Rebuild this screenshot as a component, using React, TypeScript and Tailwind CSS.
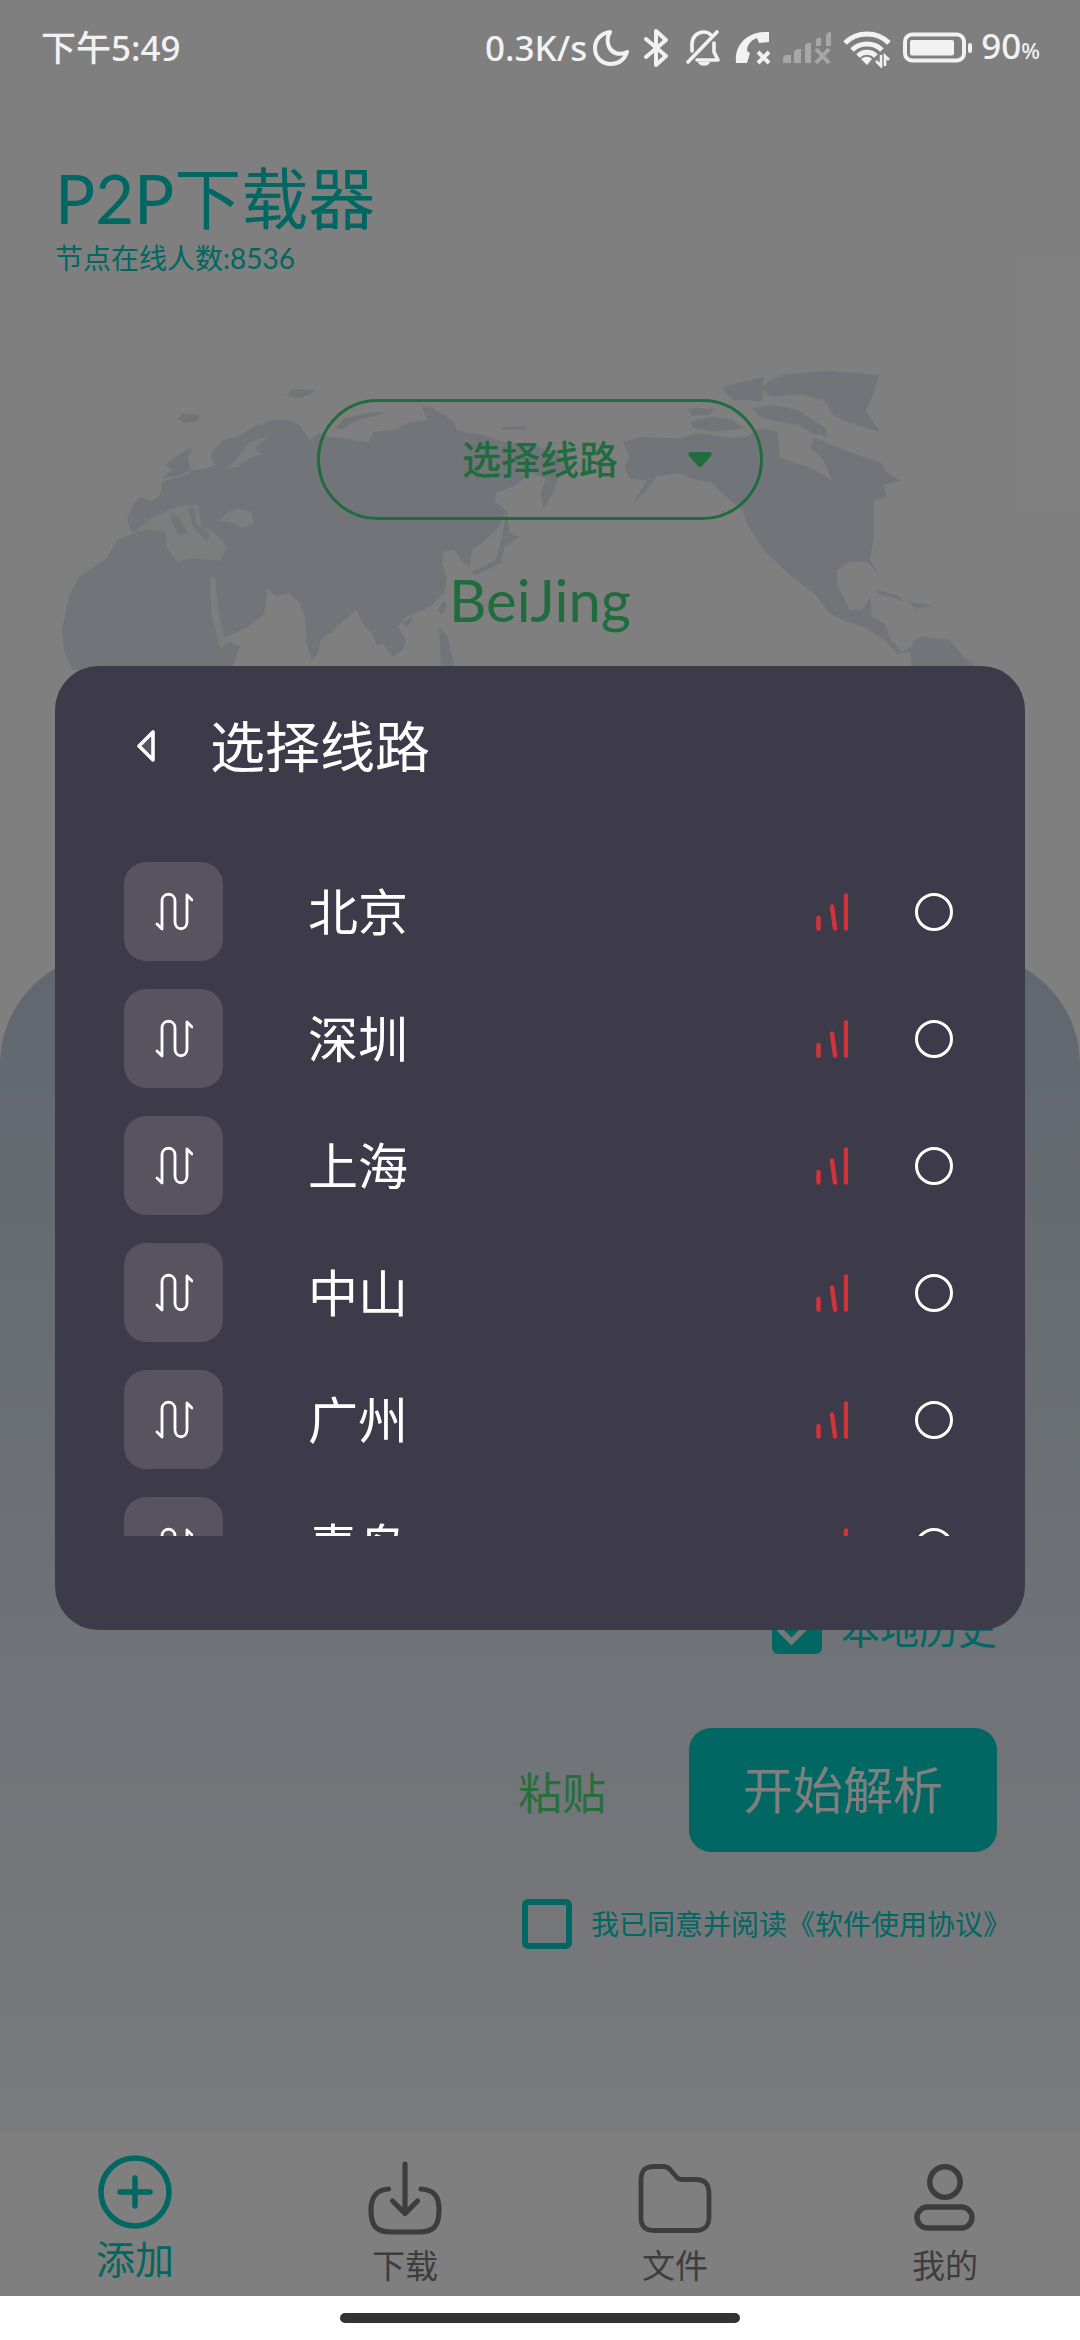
import React, { useState } from 'react';

type IconProps = {
  className?: string;
};

const lines = ['北京', '深圳', '上海', '中山', '广州', '青岛'];

const StatusIcons: React.FC = () => (
  <>
    <svg className="ml-1.5 h-10 w-9" viewBox="0 0 36 40" fill="none" stroke="currentColor" strokeWidth="4" strokeLinejoin="round">
      <path d="M17 4C8 5 2 12 2 20c0 10 7 16 16 16 8 0 14-5 16-12-8 4-15 1-18-5-2-5-2-10 1-15Z" />
    </svg>
    <svg className="ml-3.5 h-10 w-7" viewBox="0 0 28 40" fill="none" stroke="currentColor" strokeWidth="4" strokeLinejoin="round" strokeLinecap="round">
      <path d="M3 11l20 17-10 9V3l10 9L3 29" />
    </svg>
    <svg className="ml-3.5 h-10 w-9" viewBox="0 0 36 40" fill="none" stroke="currentColor" strokeWidth="3.6" strokeLinecap="round">
      <path d="M32 4 3 34" />
      <path d="M7 23V16C7 9 12 4 19 4c3 0 5 1 7 3" />
      <path d="M29 15v9l4 8H12" strokeLinejoin="round" />
      <path d="M13 34h12c-1 5-11 5-12 0Z" fill="currentColor" stroke="none" />
    </svg>
    <svg className="ml-3.5 h-10 w-9" viewBox="0 0 36 40">
      <path fill="currentColor" d="M1 35C-1 16 13 3 34 4v10l-10 1-2-5c-6 2-10 7-10 13l3 2-3 10H3Z" />
      <path d="m23 24 11 11m0-11L23 35" stroke="currentColor" strokeWidth="4" fill="none" />
    </svg>
    <svg className="ml-3 h-10 w-12 opacity-35" viewBox="0 0 48 40">
      <path fill="currentColor" d="M0 35v-4q0-4 4-4h4v8ZM11 35V25q0-3 3-4h4v14ZM22 35V18q0-3 3-3h3v20ZM33 18v-5q0-3 3-3h2v8ZM43 18V8q0-3 3-4h2v14Z" />
      <path d="m33 21 13 14m0-14L33 35" stroke="currentColor" strokeWidth="4" fill="none" />
    </svg>
    <svg className="ml-3 h-10 w-12" viewBox="0 0 48 40" fill="none" stroke="currentColor" strokeWidth="5">
      <path d="M2 15C14 3 34 3 46 15M9 22c8-8 22-8 30 0M15 28c5-5 13-5 18 0" />
      <path d="M18 31c4-3 8-3 11 0l-5 6Z" fill="currentColor" stroke="none" />
      <path d="M38 27v11l-5-5M42 38V28l4 4" strokeWidth="2.6" />
    </svg>
    <svg className="ml-3 h-10 w-[70px]" viewBox="0 0 70 40" fill="currentColor">
      <rect x="2" y="6.500" width="59" height="26" rx="7" fill="none" stroke="currentColor" strokeWidth="4" />
      <rect x="7" y="12" width="44" height="15.500" rx="2" />
      <rect x="65" y="15" width="4" height="10" rx="2" />
    </svg>
  </>
);

const WorldMap: React.FC<IconProps> = ({ className }) => (
  <svg className={className} viewBox="0 0 3136 960" preserveAspectRatio="none" aria-hidden="true">
    <g fill="#e3e9f2">
      <path d="M375 535 370 500 390 460 410 440 440 455 465 435 470 395 500 385 530 380 560 360 600 355 625 345 610 320 620 300 650 270 700 255 740 228 790 210 840 210 870 225 890 255 900 270 925 250 960 262 1000 265 1040 272 1070 275 1085 245 1150 240 1180 220 1240 210 1225 170 1250 170 1290 195 1320 215 1325 240 1400 255 1460 275 1540 285 1600 300 1655 335 1625 375 1605 430 1578 480 1570 430 1585 385 1540 370 1500 405 1440 430 1437 455 1468 480 1450 530 1400 580 1370 600 1365 650 1345 640 1320 600 1290 605 1283 640 1297 680 1290 730 1250 770 1180 800 1155 830 1178 870 1170 900 1140 920 1110 880 1095 890 1080 850 1060 830 1035 780 1010 800 960 850 930 870 925 910 905 930 890 880 885 800 870 760 840 730 800 738 775 715 770 790 720 830 650 865 697 890 670 960 210 960 185 900 180 840 200 740 230 680 310 625 340 570 390 550Z" />
      <path d="M470 385 500 360 480 345 510 320 525 310 560 290 545 325 555 360 520 378Z" />
      <path d="M515 205 530 190 580 195 575 215 535 220ZM830 135 850 118 915 120 900 135 860 145ZM975 235 1000 205 1090 185 1120 190 1040 210 990 240ZM1455 232l70-4 5 10-70 2Z" />
      <path d="M1470 470 1480 550 1510 560 1465 590 1455 640 1380 675 1370 665 1440 630 1455 570 1462 530ZM1170 820l25-20 5 10-20 20ZM1270 780l20-30 8 20-15 25ZM1275 830l25 30 20 90h-40Z" />
      <g transform="translate(1568 0)">
        <path d="M240 275 290 262 400 265 460 250 560 265 600 260 640 235 690 245 695 320 730 335 775 350 820 372 848 392 820 325 785 295 795 262 860 290 950 325 990 340 1010 370 1048 392 1000 405 1005 440 970 452 970 560 958 630 990 680 950 635 900 635 862 660 865 710 900 780 935 780 960 740 963 800 1000 820 1020 870 1050 905 1080 890 1085 870 1110 860 1190 870 1230 920 1280 960 1080 960 1075 905 1040 912 1000 870 940 830 890 815 840 790 800 735 720 670 650 600 600 520 588 480 540 440 500 400 440 385 400 370 340 378 310 420 270 460 310 392 260 385 245 350 260 320Z" />
        <path d="M660 95 700 75 830 62 985 75 970 130 945 185 988 245 900 220 850 195 830 155 760 132 670 140 645 115Z" />
        <path d="M525 112 650 80 645 155 600 150 560 150ZM430 180 450 172 510 180 490 195 440 198ZM435 215 500 200 560 210 590 235 520 245 445 235ZM615 175 680 165 750 180 830 235 835 262 790 250 750 225 690 215 640 200ZM975 720l60 15 25 20-80-25ZM1070 755l70 12-50 10Z" />
      </g>
    </g>
    <g fill="#f9fafb">
      <path d="M385 547 440 505 495 478 545 465 575 465 585 530 620 545 660 590 640 632 560 625 515 635 485 595 480 545 430 540Z" />
      <path d="M640 512 660 488 690 475 730 485 735 520 705 535 680 520ZM650 360 680 335 725 275 780 258 740 295 760 312 725 325 690 350Z" />
      <path d="M610 680 625 680 635 790 655 868 690 860 640 895 615 800Z" />
    </g>
    <g fill="#e3e9f2">
      <path d="M495 485 520 505 545 550 520 555 500 520ZM545 470 565 475 570 520 610 555 600 575 560 530Z" />
    </g>
  </svg>
);

const RouteIcon: React.FC<IconProps> = ({ className }) => (
  <svg className={className} viewBox="0 0 38 40" fill="none" stroke="currentColor" strokeWidth="2.800" strokeLinecap="round" strokeLinejoin="round">
    <path d="M2 32l5 5V9c0-9 13-9 13 0v21c0 9 12 9 12 0V3l5 5" />
  </svg>
);

const SignalIcon: React.FC<IconProps> = ({ className }) => (
  <svg className={className} viewBox="0 0 32 38" fill="none" stroke="#d1333b" strokeWidth="4.500" strokeLinecap="round">
    <path d="M2.500 25v10.500M16 13.500l3 22M30 2.500v33" />
  </svg>
);

const AddIcon: React.FC<IconProps> = ({ className }) => (
  <svg className={className} viewBox="0 0 74 74" fill="none" stroke="currentColor" strokeWidth="5.500" strokeLinecap="round">
    <circle cx="37" cy="37" r="34" />
    <path d="M37 23v28M22 37h30" />
  </svg>
);

const DownloadIcon: React.FC<IconProps> = ({ className }) => (
  <svg className={className} viewBox="0 0 74 74" fill="none" stroke="currentColor" strokeWidth="5.200" strokeLinecap="round" strokeLinejoin="round">
    <path d="M37 3v49M24.500 40 37 52.500 49.500 40" />
    <path d="M20.500 28C8 29 3 36 3 49c0 16 5 22 20 22h28c15 0 20-6 20-22 0-13-4-20-18-21" />
  </svg>
);

const FolderIcon: React.FC<IconProps> = ({ className }) => (
  <svg className={className} viewBox="0 0 74 74" fill="none" stroke="currentColor" strokeWidth="4.800" strokeLinejoin="round">
    <path d="M3 20C3 9 7 5.500 17 5.500h9c3 0 4 1 6 3l7 8c1 1 2 2 4 2h14c10 0 14 4 14 15v22c0 10-4 14-14 14H17C7 69.500 3 66 3 56Z" />
  </svg>
);

const UserIcon: React.FC<IconProps> = ({ className }) => (
  <svg className={className} viewBox="0 0 74 74" fill="none" stroke="currentColor" strokeWidth="5.500">
    <circle cx="37" cy="21" r="15.200" />
    <rect x="9" y="46" width="55" height="21" rx="10.500" />
  </svg>
);

const tabs = [
  { label: '下载', icon: DownloadIcon },
  { label: '文件', icon: FolderIcon },
  { label: '我的', icon: UserIcon },
];

const LineDialog: React.FC = () => {
  const [selected, setSelected] = useState('');

  return (
    <div className="absolute inset-0 z-10 flex flex-col justify-center bg-black/50 px-[55px]">
      <div role="dialog" aria-labelledby="dialog_title" className="rounded-[44px] bg-[#3d3a49] pt-10 pr-[72px] pb-[94px] pl-[69px] text-white">
        <div className="flex h-20 items-center gap-[42px]">
          <button type="button" aria-label="返回" className="flex h-11 w-11 items-center justify-center">
            <svg className="h-8 w-[18px]" viewBox="0 0 18 32" fill="#56545f" stroke="currentColor" strokeWidth="3.600" strokeLinejoin="round">
              <path d="M16 2v28L2 16Z" />
            </svg>
          </button>
          <h2 id="dialog_title" className="text-[55px] leading-[80px]">选择线路</h2>
        </div>
        <ul className="mt-[76px] flex h-[674px] flex-col gap-7 overflow-y-auto [scrollbar-width:none]">
          {lines.map((line) => (
            <li key={line}>
              <label className="flex items-center">
                <span className="flex h-[99px] w-[99px] items-center justify-center rounded-[22px] bg-[#575460]">
                  <RouteIcon className="h-10 w-[38px]" />
                </span>
                <span className="ml-[85px] flex-1 text-[50px] leading-[72px]">{line}</span>
                <SignalIcon className="mr-[67px] h-[38px] w-8" />
                <input
                  type="radio"
                  name="line"
                  value={line}
                  checked={selected === line}
                  onChange={() => setSelected(line)}
                  className="h-[38px] w-[38px] appearance-none rounded-full border-[3px] border-white checked:bg-white"
                />
              </label>
            </li>
          ))}
        </ul>
      </div>
    </div>
  );
};

const App: React.FC = () => {
  const [history, setHistory] = useState(true);
  const [agreed, setAgreed] = useState(false);

  return (
    <div lang="zh-CN" className="flex min-h-screen flex-col bg-white font-['Lato','Noto_Sans_CJK_SC',sans-serif]">
      <div className="relative flex flex-1 flex-col overflow-hidden">
        <div className="relative z-20 flex h-24 items-center justify-between pr-10 pl-[41px] font-['Noto_Sans','Noto_Sans_CJK_SC',sans-serif] text-[35px] leading-10 font-medium text-[#f2f2f2]">
          <span>下午5:49</span>
          <div className="flex items-center">
            <span>0.3K/s</span>
            <StatusIcons />
            <span className="ml-2">
              90<span className="text-[22px]">%</span>
            </span>
          </div>
        </div>

        <header className="px-[55px] pt-[62px] text-[#00cec4]">
          <h1 className="text-[67px] leading-[80px]">P2P下载器</h1>
          <p className="text-[28px] leading-10">节点在线人数:8536</p>
        </header>

        <section className="relative mt-[72px] flex h-[604px] flex-col items-center text-[#42d87e]">
          <WorldMap className="absolute inset-x-0 top-0 aspect-[27/8] w-full" />
          <button
            type="button"
            aria-haspopup="dialog"
            className="relative mt-[49px] flex h-[121px] w-[446px] items-center justify-end gap-[70px] rounded-full border-[3px] border-current pr-12 text-[39px] font-medium"
          >
            选择线路
            <svg className="h-[15px] w-6" viewBox="0 0 24 15" fill="currentColor">
              <path d="M2 0h20q3 2 1 4L14 14q-2 2-4 0L1 4Q-1 2 2 0Z" />
            </svg>
          </button>
          <p className="relative mt-10 text-[58px] leading-[80px]">BeiJing</p>
        </section>

        <main className="flex flex-1 flex-col items-end justify-end rounded-t-[110px] bg-linear-to-b from-[#c2cfdf] to-[#f3f5f9] pr-[69px] pb-[182px] text-[#00cec4]">
          <label className="mr-3.5 flex items-center gap-[19px] text-[39px] leading-[50px]">
            <span className="relative h-[50px] w-[50px]">
              <input
                type="checkbox"
                checked={history}
                onChange={(e) => setHistory(e.target.checked)}
                className="block h-[50px] w-[50px] appearance-none rounded-[6px] border-[6px] border-[#00cec4] checked:bg-[#00cec4]"
              />
              {history && (
                <svg className="pointer-events-none absolute inset-0" viewBox="0 0 50 50" fill="none" stroke="#eceef0" strokeWidth="5.500">
                  <path d="M7 25l12.500 12.500L43 14" />
                </svg>
              )}
            </span>
            本地历史
          </label>
          <div className="mt-[74px] mr-3.5 flex items-center gap-[83px]">
            <button type="button" className="pt-1.5 text-[44px] text-[#4fdc78]">粘贴</button>
            <button type="button" className="h-[124px] rounded-[22px] bg-[#00cec4] px-[54px] text-[50px] text-white">
              开始解析
            </button>
          </div>
          <label className="mt-[47px] flex items-center gap-[19px] text-[28px] leading-[50px] whitespace-nowrap">
            <input
              type="checkbox"
              checked={agreed}
              onChange={(e) => setAgreed(e.target.checked)}
              className="h-[50px] w-[50px] appearance-none rounded-[6px] border-[6px] border-[#00cec4] checked:bg-[#00cec4]"
            />
            我已同意并阅读《软件使用协议》
          </label>
        </main>

        <nav className="grid h-[165px] grid-cols-4 bg-white text-[#7a7a7a]">
          <a href="#add" className="flex flex-col items-center pt-6 text-[#00cec4]">
            <AddIcon className="h-[74px] w-[74px]" />
            <span className="mt-1.5 text-[39px] leading-[48px]">添加</span>
          </a>
          {tabs.map(({ label, icon: Icon }) => (
            <a key={label} href={'#' + label} className="flex flex-col items-center pt-[30px]">
              <Icon className="h-[74px] w-[74px]" />
              <span className="mt-1.5 text-[33px] leading-[48px]">{label}</span>
            </a>
          ))}
        </nav>

        <LineDialog />
      </div>

      <footer className="flex h-11 items-center justify-center bg-white">
        <div className="h-2.5 w-[400px] rounded-full bg-[#333]" />
      </footer>
    </div>
  );
};

export default App;
